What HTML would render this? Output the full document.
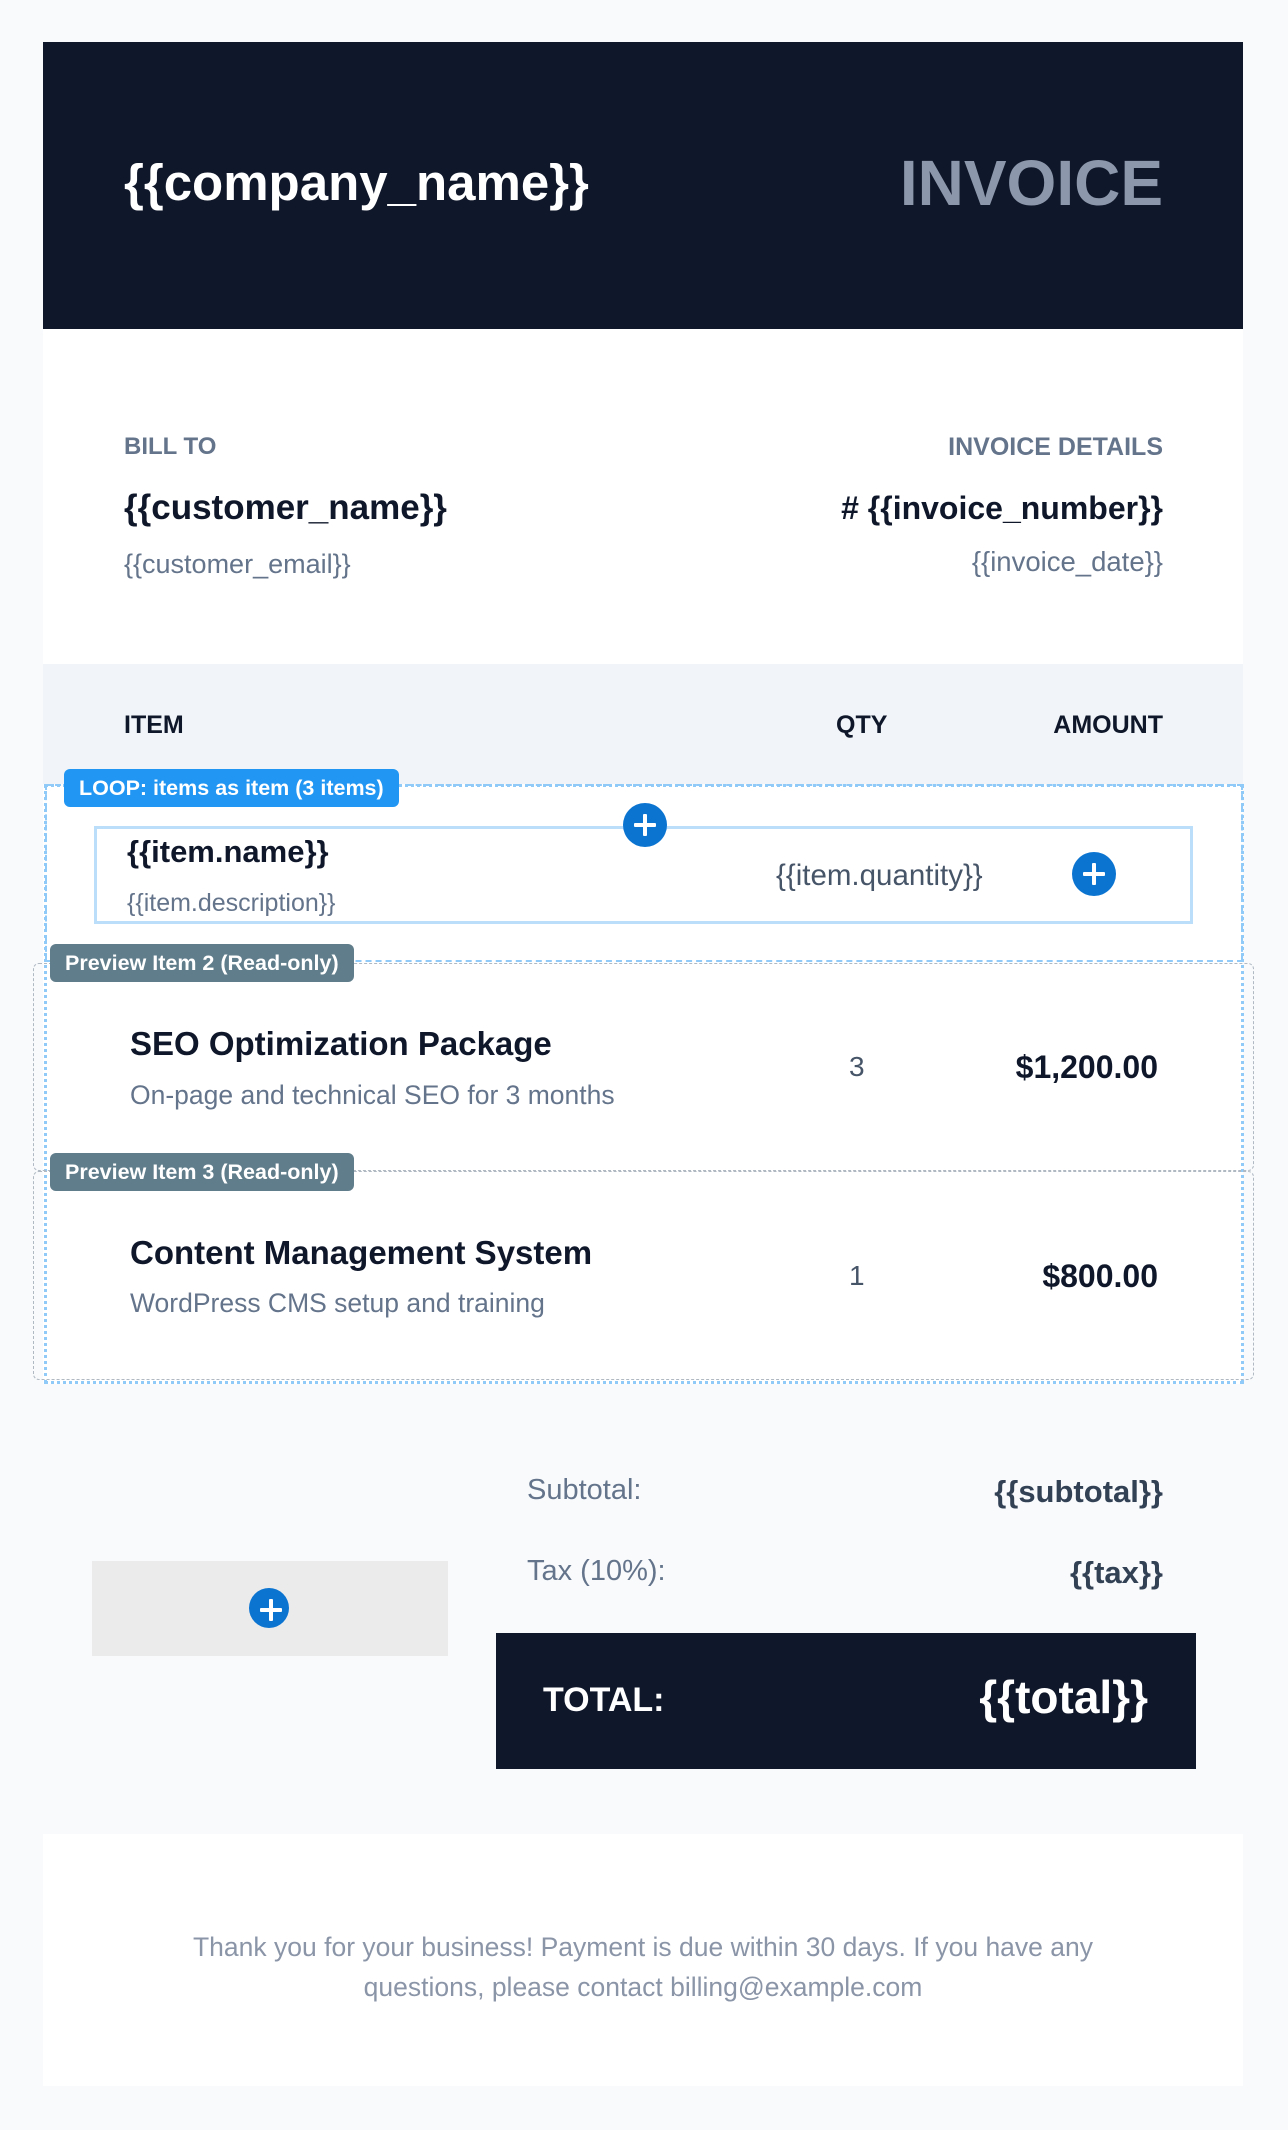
<!DOCTYPE html>
<html><head><meta charset="utf-8"><style>
*{margin:0;padding:0;box-sizing:border-box}
body{width:1288px;height:2130px;background:#f8fafc;font-family:"Liberation Sans",Arial,sans-serif;position:relative;overflow:hidden}
.a{position:absolute;white-space:nowrap}
.plus{position:absolute;width:44px;height:44px;border-radius:50%;background:#0b74d1}
.plus:before{content:"";position:absolute;left:11px;top:20px;width:22px;height:4px;background:#fff;border-radius:1px}
.plus:after{content:"";position:absolute;left:20px;top:11px;width:4px;height:22px;background:#fff;border-radius:1px}
.lbl{position:absolute;color:#fff;font-weight:bold;font-size:21.5px;border-radius:6px;padding:0 15px;line-height:38px;white-space:nowrap}
</style></head><body>
<div class="a" style="left:43px;top:42px;width:1200px;height:287px;background:#0f172a"></div>
<div class="a" style="left:124px;top:153px;font-size:51px;font-weight:bold;color:#fff;line-height:60px">{{company_name}}</div>
<div class="a" style="right:125px;top:148px;font-size:64px;font-weight:bold;color:#8c97ab;line-height:70px">INVOICE</div>

<div class="a" style="left:43px;top:329px;width:1200px;height:335px;background:#fff"></div>
<div class="a" style="left:124px;top:433px;font-size:24px;font-weight:bold;color:#64748b">BILL TO</div>
<div class="a" style="left:124px;top:488px;font-size:35px;font-weight:bold;color:#0f172a">{{customer_name}}</div>
<div class="a" style="left:124px;top:549px;font-size:27px;color:#64748b">{{customer_email}}</div>
<div class="a" style="right:125px;top:433px;font-size:25px;font-weight:bold;color:#64748b">INVOICE DETAILS</div>
<div class="a" style="right:125px;top:490px;font-size:32px;font-weight:bold;color:#0f172a"># {{invoice_number}}</div>
<div class="a" style="right:125px;top:546px;font-size:27.5px;color:#64748b">{{invoice_date}}</div>

<div class="a" style="left:43px;top:664px;width:1200px;height:120px;background:#f1f5f9"></div>
<div class="a" style="left:124px;top:711px;font-size:25px;font-weight:bold;color:#0f172a">ITEM</div>
<div class="a" style="left:836px;top:711px;font-size:25px;font-weight:bold;color:#0f172a">QTY</div>
<div class="a" style="right:125px;top:711px;font-size:25px;font-weight:bold;color:#0f172a">AMOUNT</div>

<div class="a" style="left:43px;top:784px;width:1200px;height:600px;background:#fff"></div>
<div class="a" style="left:45px;top:784px;width:1198px;height:178px;border:2px dashed #90caf9"></div>
<div class="a" style="left:44px;top:784px;width:1200px;height:600px;border:3px dotted #90caf9"></div>
<div class="a" style="left:33px;top:963px;width:1221px;height:208px;border:1px dashed #b0b8c2;border-radius:6px"></div>
<div class="a" style="left:33px;top:1171px;width:1221px;height:209px;border:1px dashed #b0b8c2;border-radius:6px"></div>

<div class="a" style="left:94px;top:826px;width:1099px;height:98px;border:3px solid #bbdefb"></div>
<div class="a" style="left:127px;top:834px;font-size:31px;font-weight:bold;color:#0f172a">{{item.name}}</div>
<div class="a" style="left:127px;top:889px;font-size:25px;color:#64748b">{{item.description}}</div>
<div class="a" style="left:776px;top:859px;font-size:29.5px;color:#475569">{{item.quantity}}</div>
<div class="plus" style="left:623px;top:803px"></div>
<div class="plus" style="left:1072px;top:852px"></div>
<div class="lbl" style="left:64px;top:769px;background:#2196f3">LOOP: items as item (3 items)</div>

<div class="lbl" style="left:50px;top:944px;background:#607d8b">Preview Item 2 (Read-only)</div>
<div class="a" style="left:130px;top:1025px;font-size:33px;font-weight:bold;color:#0f172a">SEO Optimization Package</div>
<div class="a" style="left:130px;top:1080px;font-size:26.5px;color:#64748b">On-page and technical SEO for 3 months</div>
<div class="a" style="left:849px;top:1051px;font-size:28px;color:#475569">3</div>
<div class="a" style="right:130px;top:1049px;font-size:32px;font-weight:bold;color:#0f172a">$1,200.00</div>

<div class="lbl" style="left:50px;top:1153px;background:#607d8b">Preview Item 3 (Read-only)</div>
<div class="a" style="left:130px;top:1234px;font-size:33px;font-weight:bold;color:#0f172a">Content Management System</div>
<div class="a" style="left:130px;top:1288px;font-size:26.5px;color:#64748b">WordPress CMS setup and training</div>
<div class="a" style="left:849px;top:1260px;font-size:28px;color:#475569">1</div>
<div class="a" style="right:130px;top:1258px;font-size:32px;font-weight:bold;color:#0f172a">$800.00</div>

<div class="a" style="left:527px;top:1474px;font-size:29px;color:#64748b">Subtotal:</div>
<div class="a" style="right:125px;top:1474px;font-size:31px;font-weight:bold;color:#334155">{{subtotal}}</div>
<div class="a" style="left:527px;top:1555px;font-size:29px;color:#64748b">Tax (10%):</div>
<div class="a" style="right:125px;top:1555px;font-size:31px;font-weight:bold;color:#334155">{{tax}}</div>
<div class="a" style="left:92px;top:1561px;width:356px;height:95px;background:#ebebeb"></div>
<div class="plus" style="left:249px;top:1588px;width:40px;height:40px"></div>
<div class="a" style="left:496px;top:1633px;width:700px;height:136px;background:#0f172a"></div>
<div class="a" style="left:543px;top:1681px;font-size:34px;font-weight:bold;color:#fff">TOTAL:</div>
<div class="a" style="right:140px;top:1670px;font-size:46px;font-weight:bold;color:#fff">{{total}}</div>

<div class="a" style="left:43px;top:1834px;width:1200px;height:252px;background:#fff"></div>
<div class="a" style="left:43px;top:1927px;width:1200px;text-align:center;font-size:26.5px;line-height:40px;color:#8b95a8;white-space:normal">Thank you for your business! Payment is due within 30 days. If you have any<br>questions, please contact billing@example.com</div>
</body></html>
